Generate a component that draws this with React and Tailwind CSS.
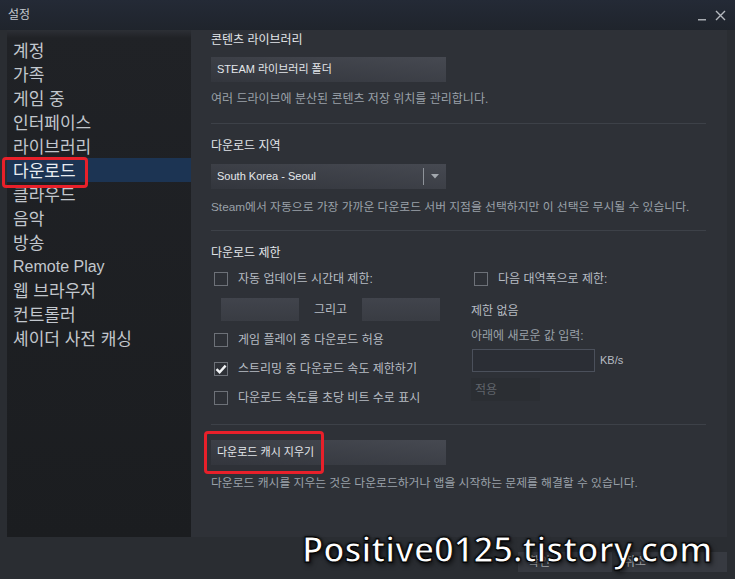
import { useState } from 'react'

const FONT = "font-['Arial','Liberation_Sans','Noto_Sans_CJK_KR',sans-serif]"

const menu = [
  '계정',
  '가족',
  '게임 중',
  '인터페이스',
  '라이브러리',
  '다운로드',
  '클라우드',
  '음악',
  '방송',
  'Remote Play',
  '웹 브라우저',
  '컨트롤러',
  '셰이더 사전 캐싱',
]

function Checkbox({ checked, label }) {
  return (
    <div className="flex items-center h-[14px]">
      <div className="w-[14px] h-[14px] border border-[#6d7178] flex items-center justify-center shrink-0">
        {checked && (
          <svg width="12" height="12" viewBox="0 0 12 12">
            <path d="M1.5 6.2 L4.6 9.2 L10.6 2.6" fill="none" stroke="#f2f4f6" strokeWidth="2.4" />
          </svg>
        )}
      </div>
      <span className="ml-[10px] text-[12px] text-[#b7bcc3] leading-none">{label}</span>
    </div>
  )
}

function Divider({ className }) {
  return <div className={`h-px bg-[#3d4148] mr-[21px] ${className}`} />
}

export default function App() {
  const [active] = useState(5)

  return (
    <div className={`relative w-[735px] h-[579px] bg-[#2a2d32] overflow-hidden ${FONT}`}>
      {/* title bar */}
      <div className="h-[30px] bg-linear-to-b from-[#242a36] to-[#1f242c] flex items-center justify-between pl-[8px] pr-[9px]">
        <span className="text-[12px] text-[#c3c8cf]">설정</span>
        <div className="flex items-center gap-[8px]">
          <svg width="9" height="12" viewBox="0 0 9 12">
            <rect x="0" y="10" width="8" height="1.5" fill="#a7abb1" />
          </svg>
          <svg width="11" height="11" viewBox="0 0 11 11">
            <path d="M1 1 L10 10 M10 1 L1 10" stroke="#b5b9bf" strokeWidth="1.4" />
          </svg>
        </div>
      </div>

      {/* body */}
      <div className="flex h-[507px] pl-[7px] pr-[8px]">
        <aside className="relative w-[184px] bg-linear-to-b from-[#202226] to-[#1b1d20]">
          <div className="h-[8px] bg-linear-to-b from-[#2c2f35] to-[#202226]" />
          <ul>
            {menu.map((m, i) => (
              <li
                key={m}
                className={`h-6 pt-[5px] leading-none pl-[6px] ${m === 'Remote Play' ? 'text-[16px]' : 'text-[17px]'} ${
                  i === active ? 'bg-[#1c3453] text-[#e8ecf0]' : 'text-[#c2c7cd]'
                }`}
              >
                {m}
              </li>
            ))}
          </ul>
        </aside>

        <main className="flex-1 bg-[#2e3137] pl-[20px] pt-[2px]">
          <div className="text-[12px] leading-[16px] text-[#e2e5e9]">콘텐츠 라이브러리</div>
          <button className="mt-[9px] w-[235px] h-[25px] bg-linear-to-tr from-[#33363d] to-[#464951] text-left pl-[6px] text-[11px] text-[#e3e6ea]">
            STEAM 라이브러리 폴더
          </button>
          <div className="mt-[9px] text-[12px] leading-[16px] text-[#9aa1a9]">
            여러 드라이브에 분산된 콘텐츠 저장 위치를 관리합니다.
          </div>
          <Divider className="mt-[16px]" />

          <div className="mt-[14px] text-[12px] leading-[16px] text-[#e2e5e9]">다운로드 지역</div>
          <div className="mt-[10px] w-[235px] h-[25px] bg-linear-to-tr from-[#33363d] to-[#464951] flex items-center pl-[6px] text-[11px] text-[#e6e9ec]">
            <span className="flex-1">South Korea - Seoul</span>
            <div className="w-px h-[17px] bg-[#8e939a]" />
            <svg className="mx-[7px]" width="8" height="5" viewBox="0 0 8 5">
              <path d="M0 0 L8 0 L4 4.5 Z" fill="#a3a8ae" />
            </svg>
          </div>
          <div className="mt-[10px] text-[11.8px] leading-[16px] text-[#9aa1a9] whitespace-nowrap">
            Steam에서 자동으로 가장 가까운 다운로드 서버 지점을 선택하지만 이 선택은 무시될 수 있습니다.
          </div>
          <Divider className="mt-[15px]" />

          <div className="mt-[14px] text-[12px] leading-[16px] text-[#e2e5e9]">다운로드 제한</div>
          <div className="mt-[11px] flex">
            <div className="w-[260px] pl-[3px]">
              <Checkbox label="자동 업데이트 시간대 제한:" />
              <div className="mt-[12px] flex items-center pl-[7px]">
                <div className="w-[78px] h-[23px] bg-linear-to-b from-[#41444c] to-[#393c43]" />
                <span className="w-[63px] text-center text-[12px] text-[#b7bcc3]">그리고</span>
                <div className="w-[78px] h-[23px] bg-linear-to-b from-[#41444c] to-[#393c43]" />
              </div>
              <div className="mt-[12px]">
                <Checkbox label="게임 플레이 중 다운로드 허용" />
              </div>
              <div className="mt-[15px]">
                <Checkbox checked label="스트리밍 중 다운로드 속도 제한하기" />
              </div>
              <div className="mt-[15px]">
                <Checkbox label="다운로드 속도를 초당 비트 수로 표시" />
              </div>
            </div>
            <div className="flex-1">
              <div className="pl-[3px]">
                <Checkbox label="다음 대역폭으로 제한:" />
              </div>
              <div className="mt-[17px] text-[12px] leading-[16px] text-[#b7bcc3]">제한 없음</div>
              <div className="mt-[9px] text-[12px] leading-[16px] text-[#9aa1a9]">아래에 새로운 값 입력:</div>
              <div className="mt-[5px] flex items-center">
                <div className="ml-px w-[123px] h-[23px] border border-[#4b505b] bg-[#2b2e35]" />
                <span className="ml-[5px] text-[11px] text-[#b7bcc3]">KB/s</span>
              </div>
              <div className="mt-[6px] w-[69px] h-[23px] bg-[#2b2e33] flex items-center pl-[4px] text-[12px] text-[#60656c]">
                적용
              </div>
            </div>
          </div>
          <Divider className="mt-[19px]" />

          <button className="mt-[15px] w-[235px] h-[25px] bg-linear-to-tr from-[#33363d] to-[#464951] text-left pl-[6px] text-[11px] text-[#e3e6ea]">
            다운로드 캐시 지우기
          </button>
          <div className="mt-[10px] text-[11.8px] leading-[16px] text-[#9aa1a9]">
            다운로드 캐시를 지우는 것은 다운로드하거나 앱을 시작하는 문제를 해결할 수 있습니다.
          </div>
        </main>
      </div>

      {/* footer */}
      <div className="flex justify-end gap-[8px] pr-[8px] pt-[15px]">
        <button className="w-[94px] h-[20px] bg-[#373a41] text-[12px] text-[#aeb3b9] text-left pl-[10px]">확인</button>
        <button className="w-[107px] h-[20px] bg-[#373a41] text-[12px] text-[#aeb3b9] text-left pl-[4px]">취소</button>
      </div>

      {/* annotations */}
      <div className="absolute left-[2px] top-[157px] w-[86px] h-[31px] border-[3px] border-[#e8202a] rounded-[4px]" />
      <div className="absolute left-[204px] top-[431px] w-[120px] h-[43px] border-[3px] border-[#e8202a] rounded-[4px]" />

      {/* watermark */}
      <div className="absolute left-[302px] top-[525px] font-['Noto_Sans',sans-serif] font-semibold text-[34.5px] leading-[48px] text-white [-webkit-text-stroke:1px_#000] [text-shadow:0_0_2px_#000,0_0_3px_#000,2px_3px_5px_rgba(0,0,0,0.6)]">
        Positive0125.tistory.com
      </div>
    </div>
  )
}
